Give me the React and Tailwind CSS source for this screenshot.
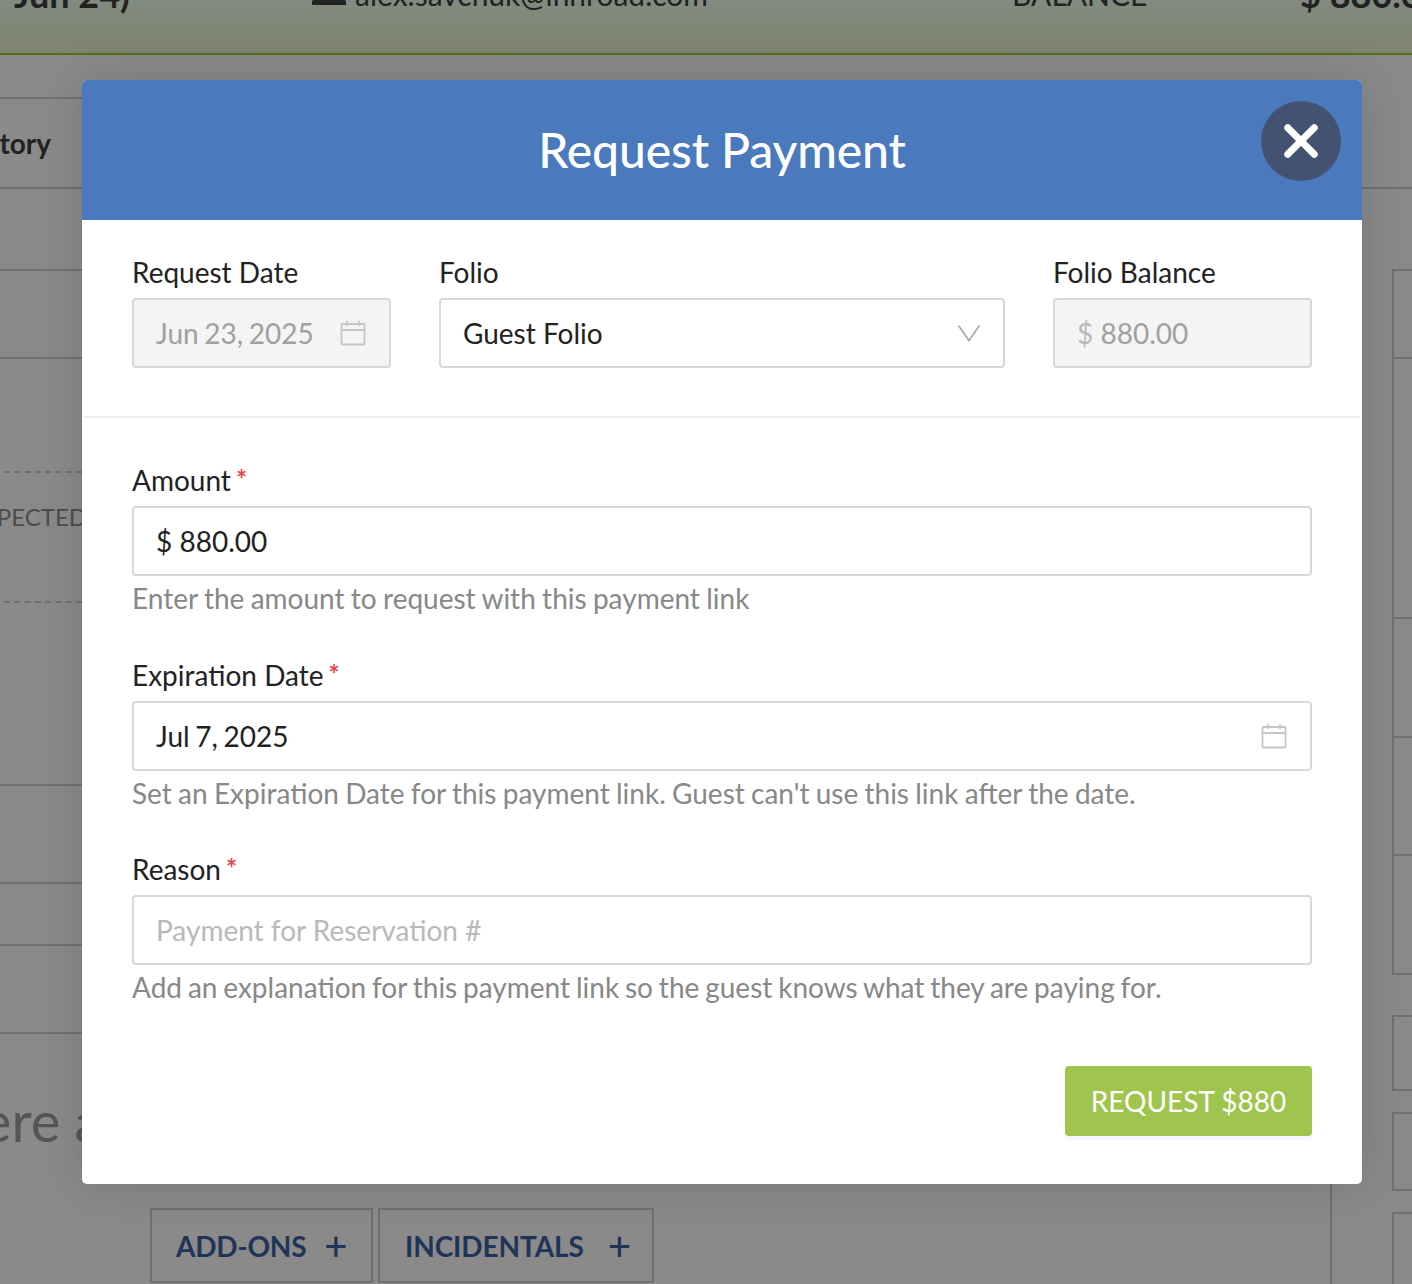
const CalendarIcon = ({ className }) => (
  <svg viewBox="0 0 26 26" fill="none" stroke="currentColor" strokeWidth="1.8" className={className}>
    <rect x="1.5" y="4" width="23" height="20.5" rx="1" />
    <path d="M1.5 10h23M7 1v5M19 1v5" />
  </svg>
);

const ChevronIcon = () => (
  <svg viewBox="0 0 24 18" fill="none" stroke="currentColor" strokeWidth="1.7" className="w-6 h-[18px] text-[#a9a9a9]">
    <path d="M1.5 1.5 12 16.5 22.5 1.5" />
  </svg>
);

const Field = ({ label, required, children, help, className }) => (
  <div className={className}>
    <label className="flex h-9 items-center pb-[2px] text-[#222]">
      {label}
      {required && <span className="ml-[5px] -mt-[2px] text-[26px] font-bold leading-none text-[#e5484d]">*</span>}
    </label>
    <div className="mt-[7px]">{children}</div>
    {help && <p className="mt-[5px] h-9 text-[#888] leading-[34px]">{help}</p>}
  </div>
);

const Box = ({ disabled, children }) => (
  <div
    className={`flex h-[70px] items-center justify-between rounded-[4px] border-2 border-[#d8d8d8] pl-[22px] ${
      disabled ? "bg-[#f4f4f4] text-[#a0a0a0]" : "bg-white text-[#222]"
    }`}
  >
    {children}
  </div>
);

const RequestPaymentModal = () => (
  <div className="absolute left-[82px] top-[80px] w-[1280px] overflow-hidden rounded-[5px] bg-white text-[28px] shadow-[0_0_50px_rgba(0,0,0,0.14)]">
    <div className="relative flex h-[140px] items-center justify-center bg-[#4a79bd]">
      <h2 className="text-[48px] font-medium tracking-[-0.1px] text-white">Request Payment</h2>
      <button className="absolute right-[21px] top-[21px] flex h-20 w-20 items-center justify-center rounded-full bg-[#445272]">
        <svg viewBox="0 0 32 32" fill="none" stroke="white" strokeWidth="6.5" strokeLinecap="round" className="h-[34px] w-[34px]">
          <path d="M3.5 3.5 28.5 28.5M28.5 3.5 3.5 28.5" />
        </svg>
      </button>
    </div>

    <div className="flex gap-12 px-[50px] pb-[48px] pt-[35px]">
      <Field label="Request Date" className="w-[259px]">
        <Box disabled>
          <span className="[word-spacing:-1.5px]">Jun 23, 2025</span>
          <CalendarIcon className="mr-[23px] h-[26px] w-[26px] text-[#c6c6c6]" />
        </Box>
      </Field>
      <Field label="Folio" className="w-[566px]">
        <Box>
          Guest Folio
          <span className="mr-[22px]"><ChevronIcon /></span>
        </Box>
      </Field>
      <Field label="Folio Balance" className="w-[259px]">
        <Box disabled>
          <span><span className="text-[#b8b8b8]">$</span> 880.00</span>
        </Box>
      </Field>
    </div>

    <div className="mx-[2px] h-[2px] bg-[#ececec]" />

    <div className="px-[50px] pb-[48px] pt-[45px]">
      <Field
        label="Amount"
        required
        help={<span className="[word-spacing:-0.85px]">Enter the amount to request with this payment link</span>}
      >
        <Box>$ 880.00</Box>
      </Field>
      <Field
        label="Expiration Date"
        required
        className="mt-[41px]"
        help={<span className="[word-spacing:-0.9px]">Set an Expiration Date for this payment link. Guest can't use this link after the date.</span>}
      >
        <Box>
          <span className="[word-spacing:-1.5px]">Jul 7, 2025</span>
          <CalendarIcon className="mr-[23px] h-[26px] w-[26px] text-[#c6c6c6]" />
        </Box>
      </Field>
      <Field
        label="Reason"
        required
        className="mt-[40px]"
        help={<span className="[word-spacing:-1.3px]">Add an explanation for this payment link so the guest knows what they are paying for.</span>}
      >
        <Box><span className="text-[#b9b9b9]">Payment for Reservation #</span></Box>
      </Field>
      <div className="mt-[60px] flex justify-end">
        <button className="h-[70px] w-[247px] rounded-[4px] bg-[#a0c54e] text-white shadow-[0_4px_0_#f5f7ff]">
          REQUEST $880
        </button>
      </div>
    </div>
  </div>
);

const Backdrop = () => (
  <div className="flex h-[1284px] flex-col overflow-hidden bg-[#8a8a8a]">
    <header className="h-[55px] shrink-0 overflow-hidden border-b-2 border-[#56701f] bg-linear-to-b from-[#828b80] to-[#80846f]">
      <div className="-mt-[26px] flex h-10 items-center whitespace-nowrap leading-10 text-[#222]">
        <span className="w-[312px] shrink-0 pl-[14px] text-[36px] font-bold">Jun 24)</span>
        <svg viewBox="0 0 34 10" className="mt-[12px] h-[10px] w-[34px] shrink-0" fill="#222">
          <path d="M9 0h16l9 6v4H0V6z" />
        </svg>
        <span className="ml-[9px] w-[657px] shrink-0 text-[30px]">alex.savchuk@innroad.com</span>
        <span className="w-[288px] shrink-0 text-[30px]">BALANCE</span>
        <span className="shrink-0 text-[36px] font-bold">$ 880.00</span>
      </div>
    </header>

    <div className="h-[134px] shrink-0 border-b-2 border-[#707070]">
      <div className="mt-[42px] flex h-[90px] w-[82px] items-center justify-end overflow-hidden whitespace-nowrap border-t-2 border-[#707070] pr-[31px] text-[28px] font-bold text-[#222]">
        History
      </div>
    </div>

    <div className="flex min-h-0 flex-1">
      <div className="w-[82px] shrink-0 overflow-hidden">
        <div className="h-[82px] border-b-2 border-[#707070]" />
        <div className="h-[88px] border-b-2 border-[#707070]" />
        <div className="ml-1 h-[114px] border-b-2 border-dashed border-[#707070]" />
        <div className="ml-1 flex h-[130px] items-start justify-end whitespace-nowrap border-b-2 border-dashed border-[#707070] pt-[26px] text-[24px] leading-9 text-[#4c4c4c]">
          <span className="-mr-[5px]">EXPECTED</span>
        </div>
        <div className="h-[183px] border-b-2 border-[#707070]" />
        <div className="h-[98px] border-b-2 border-[#707070]" />
        <div className="h-[62px] border-b-2 border-[#707070]" />
        <div className="h-[88px] border-b-2 border-[#707070]" />
        <div className="-ml-[82px] mt-[52px] whitespace-nowrap text-[56px] leading-[70px] text-[#555]">There are</div>
      </div>

      <div className="flex w-[1250px] shrink-0 items-end gap-[5px] border-r-2 border-[#707070] pb-[1px] pl-[68px]">
        <button className="flex h-[75px] w-[223px] items-center gap-[18px] border-2 border-[#707070] pl-[24px] text-[28px] font-bold tracking-[-0.25px] text-[#1f3558]">
          ADD-ONS
          <span className="text-[40px] font-medium leading-none">+</span>
        </button>
        <button className="flex h-[75px] w-[276px] items-center gap-[24px] border-2 border-[#707070] pl-[25px] text-[28px] font-bold tracking-[-0.1px] text-[#1f3558]">
          INCIDENTALS
          <span className="text-[40px] font-medium leading-none">+</span>
        </button>
      </div>

      <div className="ml-[60px] flex-1">
        <div className="mt-[80px] border-b-2 border-l-2 border-t-2 border-[#707070]">
          <div className="h-[88px] border-b-2 border-[#707070]" />
          <div className="h-[260px] border-b-2 border-[#707070]" />
          <div className="h-[119px] border-b-2 border-[#707070]" />
          <div className="h-[118px] border-b-2 border-[#707070]" />
          <div className="h-[117px]" />
        </div>
        <div className="mt-[40px] h-[76px] border-b-2 border-l-2 border-t-2 border-[#707070]" />
        <div className="mt-[21px] h-[79px] border-b-2 border-l-2 border-t-2 border-[#707070]" />
        <div className="mt-[21px] h-[90px] border-l-2 border-t-2 border-[#707070]" />
      </div>
    </div>
  </div>
);

export default function App() {
  return (
    <div className="relative h-[1284px] overflow-hidden font-['Lato',sans-serif]">
      <Backdrop />
      <RequestPaymentModal />
    </div>
  );
}
